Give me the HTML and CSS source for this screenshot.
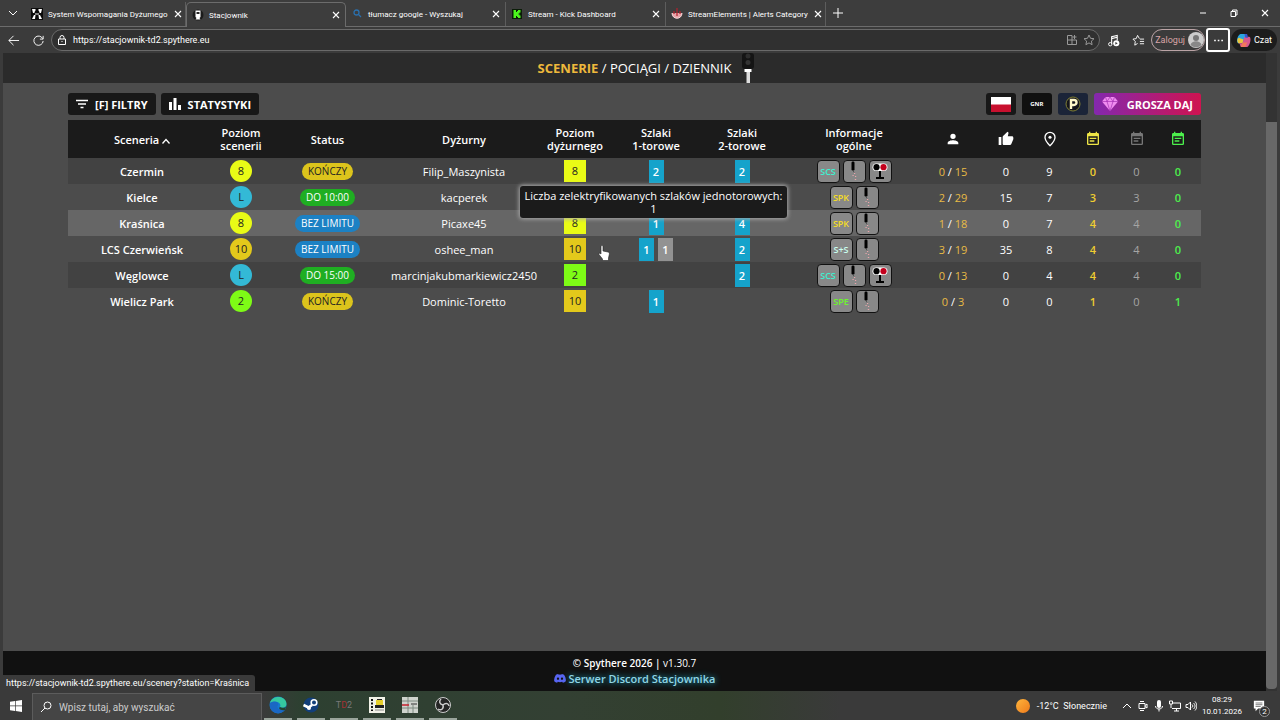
FILE: index.html
```html
<!DOCTYPE html>
<html lang="pl">
<head>
  <meta charset="UTF-8">
  <meta name="viewport" content="width=device-width, initial-scale=1.0">
  <title>Stacjownik</title>
  <link rel="stylesheet" href="styles.css">
</head>
<body>
  <!-- shared icons -->
  <svg class="sprite" aria-hidden="true">
    <symbol id="i-close" viewBox="0 0 10 10"><path d="M2 2l6 6M8 2l-6 6" fill="none" stroke="currentColor" stroke-width="1.1"/></symbol>
    <symbol id="i-signal" viewBox="0 0 20 20">
      <rect x="7.500" y="0.500" width="3" height="9" rx="1.200" fill="#000"/>
      <path d="M9 9.500l1 2" stroke="#444" stroke-width=".8"/>
      <path d="M10 12.500h1.200M8.500 14.500h1.200M11 15.500h1.200M10.800 18.500h1.400" stroke="#eba5ab" stroke-width="1.100"/>
    </symbol>
    <symbol id="i-lamps" viewBox="0 0 20 20">
      <path d="M10 9v8M6 17h8" stroke="#000" stroke-width="2"/>
      <rect x="2.500" y="2.500" width="15" height="7.500" rx="3.700" fill="#fff"/>
      <circle cx="6.500" cy="6.200" r="3.100" fill="#000"/>
      <circle cx="13.500" cy="6.200" r="3.100" fill="#c3001c"/>
    </symbol>
    <symbol id="i-calendar" viewBox="0 0 24 24"><path fill="currentColor" d="M17 10H7v2h10v-2zm2-7h-1V1h-2v2H8V1H6v2H5a2 2 0 0 0-2 2v14a2 2 0 0 0 2 2h14a2 2 0 0 0 2-2V5a2 2 0 0 0-2-2zm0 16H5V8h14v11zm-5-5H7v2h7v-2z"/></symbol>
  </svg>

  <div class="tab-bar">
    <button class="tab-menu" aria-label="Karty"><svg viewBox="0 0 10 10"><path d="M1 3l4 4 4-4" fill="none" stroke="currentColor"/></svg></button>
    <div class="tab">
      <svg class="favicon" viewBox="0 0 12 12"><path fill="#0b0b0b" d="M0 0h12v12H0z"/><path fill="#fff" d="M1 1h3.500v1.500L3.500 4v1H2zM7.500 1H11l-1 4H8.500V4l-1-1.500zM4 5.500h4v1H4zM3 7h1.500l-.5 4H1zM7.500 7H9l2 4H8z"/></svg>
      <span class="tab-title">System Wspomagania Dyżurnego</span>
      <button class="tab-close" aria-label="Zamknij"><svg><use href="#i-close"/></svg></button>
    </div>
    <div class="tab active">
      <svg class="favicon" viewBox="0 0 12 12"><circle cx="6" cy="6" r="5.500" fill="#1b1b1b"/><path fill="#fff" d="M3.500 1.500h5V8l-1 1 1 1.500h-5l1-1.500-1-1z"/><path fill="#222" d="M4.500 3h3v2h-3z"/></svg>
      <span class="tab-title">Stacjownik</span>
      <button class="tab-close" aria-label="Zamknij"><svg><use href="#i-close"/></svg></button>
    </div>
    <div class="tab">
      <svg class="favicon" viewBox="0 0 12 12"><circle cx="5.500" cy="4.500" r="2.500" fill="none" stroke="#2b70ad" stroke-width="1.300"/><path d="M7.500 6.500l2.500 2.500" stroke="#2b70ad" stroke-width="1.300"/></svg>
      <span class="tab-title">tłumacz google - Wyszukaj</span>
      <button class="tab-close" aria-label="Zamknij"><svg><use href="#i-close"/></svg></button>
    </div>
    <div class="tab">
      <svg class="favicon" viewBox="0 0 12 12"><path fill="#0b1d08" d="M1 1h10v10H1z"/><path fill="#4cf51d" d="M2.500 2H5v2h1V3h1V2h2.500v2.500h-1V5.500h-1v1h1v1h1V10H7V9H6V8H5v2H2.500z"/></svg>
      <span class="tab-title">Stream - Kick Dashboard</span>
      <button class="tab-close" aria-label="Zamknij"><svg><use href="#i-close"/></svg></button>
    </div>
    <div class="tab">
      <svg class="favicon" viewBox="0 0 12 12"><path d="M1 5c0 7 10 7 10 0" fill="#e8a3a8" stroke="#f6d8da"/><path d="M6 0v8M3 3v3M9 3v3" stroke="#b3202d" stroke-width="1.200"/></svg>
      <span class="tab-title">StreamElements | Alerts Category</span>
      <button class="tab-close" aria-label="Zamknij"><svg><use href="#i-close"/></svg></button>
    </div>
    <button class="new-tab" aria-label="Nowa karta"><svg viewBox="0 0 12 12"><path d="M6 1v10M1 6h10" stroke="currentColor"/></svg></button>
    <div class="window-controls">
      <button aria-label="Minimalizuj"><svg viewBox="0 0 10 10"><path d="M2 5h6" stroke="currentColor"/></svg></button>
      <button aria-label="Przywróć"><svg viewBox="0 0 10 10"><path d="M2 3.500h4.500V8.500H2zM3.500 3.500V2H8v5H6.500" fill="none" stroke="currentColor"/></svg></button>
      <button aria-label="Zamknij okno"><svg><use href="#i-close"/></svg></button>
    </div>
  </div>

  <div class="address-bar">
    <button aria-label="Wstecz"><svg viewBox="0 0 14 14"><path d="M13 7H2M7 2L2 7l5 5" fill="none" stroke="currentColor"/></svg></button>
    <button aria-label="Odśwież"><svg viewBox="0 0 14 14"><path d="M11.500 5A5 5 0 1 0 12 7.500M12 2v3.500H8.500" fill="none" stroke="currentColor"/></svg></button>
    <div class="url-box">
      <svg viewBox="0 0 12 12"><path d="M2.500 5h7v5.500h-7zM4 5V3.500a2 2 0 0 1 4 0V5M5.500 7.500h1" fill="none" stroke="currentColor"/></svg>
      <input type="text" aria-label="Adres" value="https://stacjownik-td2.spythere.eu">
      <svg class="dim" viewBox="0 0 12 12"><path d="M1.500 1.500H6v9H1.500zM6 6h4.500v4.500H6M1.500 6H6M8.500 1v4M6.500 3h4" fill="none" stroke="currentColor"/></svg>
      <svg class="dim" viewBox="0 0 12 12"><path d="M6 1l1.500 3.300 3.500.4-2.600 2.400.7 3.600L6 8.900l-3.100 1.800.7-3.600L1 4.700l3.500-.4z" fill="none" stroke="currentColor"/></svg>
    </div>
    <button aria-label="Muzyka"><svg viewBox="0 0 14 14"><path d="M5 11V3l6-1.500V7M5 5l6-1.500" fill="none" stroke="currentColor" stroke-width="1.200"/><circle cx="3.500" cy="11" r="1.800" fill="none" stroke="currentColor"/><circle cx="10" cy="10" r="3.300" fill="currentColor"/><path d="M9 8.500l2.500 1.500L9 11.500z" fill="#333"/></svg></button>
    <button aria-label="Ulubione"><svg viewBox="0 0 14 14"><path d="M8 5L6 1.500 4.500 5 1 5.500l2.500 2.500L3 12l3-1.800M8.500 5.500H13M8.500 8H13M8.500 10.500H13" fill="none" stroke="currentColor"/></svg></button>
    <button class="login">Zaloguj <svg viewBox="0 0 16 16"><circle cx="8" cy="8" r="8" fill="#ccc"/><circle cx="8" cy="6" r="3" fill="#777"/><path d="M2.500 13c1-5 10-5 11 0A8 8 0 0 1 2.500 13" fill="#888"/></svg></button>
    <button class="more" aria-label="Więcej"><svg viewBox="0 0 12 12"><path d="M2 6h1.500M5.300 6h1.500M8.600 6h1.500" stroke="currentColor" stroke-width="1.500"/></svg></button>
    <button class="chat"><svg viewBox="0 0 16 16"><path d="M5 1h5c2 0 1 3 3 4h-3L7 11H3C-1 11 2 1 5 1z" fill="#2aa6e0"/><path d="M3 5c-3 2-1 6 0 6h4l1-4z" fill="#e9c63d"/><path d="M9 4h5c3 0 1 11-3 11H6c-2 0-1-3-3-4h4z" fill="#d8588f"/><path d="M9 1h2c2 0 1 3 2 4h-3z" fill="#3556cf"/><path d="M5 15h5l2-5H7z" fill="#f2785c"/></svg> Czat</button>
  </div>

  <div class="viewport">
    <div class="app">
      <header class="app-header">
        <nav>
          <a class="active" href="#">SCENERIE</a> / <a href="#">POCIĄGI</a> / <a href="#">DZIENNIK</a>
          <svg class="semaphore" viewBox="0 0 14 30"><rect x="1" y="0" width="12" height="16" rx="3" fill="#141414"/><circle cx="7" cy="3" r="2.500" fill="#2d2d2d"/><circle cx="7" cy="9.500" r="2.500" fill="#333"/><path fill="#fff" d="M3.500 16h7v3h-7z"/><path fill="#ddd" d="M5.500 19h3.500v11H5.500z"/></svg>
        </nav>
      </header>

      <main>
        <div class="toolbar">
          <div class="toolbar-group">
            <button class="btn"><svg viewBox="0 0 12 12"><path d="M0 2.500h12M2 6h8M4.500 9.500h3" stroke="currentColor" stroke-width="1.500"/></svg> [F] FILTRY</button>
            <button class="btn"><svg viewBox="0 0 12 12"><path fill="currentColor" d="M0 4h3v8H0zM4.500 0h3v12h-3zM9 7h3v5H9z"/></svg> STATYSTYKI</button>
          </div>
          <div class="toolbar-group links">
            <button class="btn icon" aria-label="Język polski"><svg class="flag" viewBox="0 0 20 15"><path fill="#fff" d="M0 0h20v8H0z"/><path fill="#c8102e" d="M0 7.500h20V15H0z"/></svg></button>
            <button class="btn icon gnr">GNR</button>
            <button class="btn icon navy" aria-label="Pojazdownik"><svg class="coin" viewBox="0 0 16 16"><circle cx="8" cy="8" r="7" fill="#15151a" stroke="#7f7e35"/><path d="M6 13V4h3a2.300 2.300 0 0 1 0 5H6" fill="none" stroke="#fff8c8" stroke-width="2.400"/></svg></button>
            <button class="btn donate"><svg viewBox="0 0 16 14"><path fill="#f08cf0" d="M3.500 0h9L16 4.500 8 14 0 4.500z"/><path d="M0 4.500h16M3.500 0L5 4.500 8 14l3-9.500L12.500 0M5 4.500L8 0l3 4.500" fill="none" stroke="#a531b5" stroke-width=".7"/></svg> GROSZA DAJ</button>
          </div>
        </div>

        <div class="table-wrap">
          <table>
            <colgroup>
              <col class="c-name"><col class="c-small"><col class="c-status"><col class="c-user"><col class="c-level"><col class="c-track1"><col class="c-track2"><col class="c-info"><col class="c-players"><col class="c-small"><col class="c-spawn"><col class="c-small"><col class="c-spawn"><col>
            </colgroup>
            <thead>
              <tr>
                <th>Sceneria <svg class="sort" viewBox="0 0 8 6"><path d="M0.500 5.500L4 1.500l3.500 4" fill="none" stroke="currentColor" stroke-width="1.300"/></svg></th>
                <th>Poziom<br>scenerii</th>
                <th>Status</th>
                <th>Dyżurny</th>
                <th>Poziom<br>dyżurnego</th>
                <th>Szlaki<br>1-torowe</th>
                <th>Szlaki<br>2-torowe</th>
                <th>Informacje<br>ogólne</th>
                <th aria-label="Gracze"><svg class="th-icon" viewBox="0 0 24 24"><path fill="currentColor" d="M12 12a4 4 0 1 0 0-8 4 4 0 0 0 0 8zm0 2c-3 0-8 1.300-8 4v2h16v-2c0-2.700-5-4-8-4z"/></svg></th>
                <th aria-label="Polubienia"><svg class="th-icon" viewBox="0 0 24 24"><path fill="currentColor" d="M1 21h4V9H1v12zm22-11a2 2 0 0 0-2-2h-6.300l1-4.600v-.3c0-.4-.2-.8-.4-1.100L14.200 1 7.600 7.600C7.200 8 7 8.500 7 9v10c0 1.100.9 2 2 2h9c.8 0 1.500-.5 1.800-1.200l3-7.100c.1-.2.2-.5.2-.7v-2z"/></svg></th>
                <th aria-label="Spawny"><svg class="th-icon" viewBox="0 0 24 24"><path d="M12 2a7.500 7.500 0 0 0-7.500 7.500C4.500 15 12 22 12 22s7.500-7 7.500-12.500A7.500 7.500 0 0 0 12 2z" fill="none" stroke="currentColor" stroke-width="2"/><circle cx="12" cy="9.500" r="2.300" fill="currentColor"/></svg></th>
                <th class="yellow" aria-label="Rozkłady"><svg class="th-icon"><use href="#i-calendar"/></svg></th>
                <th class="muted" aria-label="Rozkłady nieaktywne"><svg class="th-icon"><use href="#i-calendar"/></svg></th>
                <th class="green" aria-label="Rozkłady aktywne"><svg class="th-icon"><use href="#i-calendar"/></svg></th>
              </tr>
            </thead>
            <tbody>
              <tr>
                <td class="name">Czermin</td>
                <td><span class="circle lv8">8</span></td>
                <td><span class="status ending">KOŃCZY</span></td>
                <td>Filip_Maszynista</td>
                <td><span class="square lv8">8</span></td>
                <td><span class="track">2</span></td>
                <td><span class="track">2</span></td>
                <td><div class="info"><span class="scs">SCS</span><span><svg><use href="#i-signal"/></svg></span><span><svg><use href="#i-lamps"/></svg></span></div></td>
                <td><b>0</b> / <b>15</b></td><td>0</td><td>9</td><td class="gold">0</td><td class="grey">0</td><td class="green">0</td>
              </tr>
              <tr>
                <td class="name">Kielce</td>
                <td><span class="circle lvl">L</span></td>
                <td><span class="status until">DO 10:00</span></td>
                <td>kacperek</td>
                <td></td>
                <td></td>
                <td></td>
                <td><div class="info"><span class="spk">SPK</span><span><svg><use href="#i-signal"/></svg></span></div></td>
                <td><b>2</b> / <b>29</b></td><td>15</td><td>7</td><td class="gold">3</td><td class="grey">3</td><td class="green">0</td>
              </tr>
              <tr class="hovered">
                <td class="name">Kraśnica</td>
                <td><span class="circle lv8">8</span></td>
                <td><span class="status free">BEZ LIMITU</span></td>
                <td>Picaxe45</td>
                <td><span class="square lv8">8</span></td>
                <td><span class="track">1</span></td>
                <td><span class="track">4</span></td>
                <td><div class="info"><span class="spk">SPK</span><span><svg><use href="#i-signal"/></svg></span></div></td>
                <td><b>1</b> / <b>18</b></td><td>0</td><td>7</td><td class="gold">4</td><td class="grey">4</td><td class="green">0</td>
              </tr>
              <tr>
                <td class="name">LCS Czerwieńsk</td>
                <td><span class="circle lv10">10</span></td>
                <td><span class="status free">BEZ LIMITU</span></td>
                <td>oshee_man</td>
                <td><span class="square lv10">10</span></td>
                <td><span class="track">1</span><span class="track off">1</span></td>
                <td><span class="track">2</span></td>
                <td><div class="info"><span class="ss">S+S</span><span><svg><use href="#i-signal"/></svg></span></div></td>
                <td><b>3</b> / <b>19</b></td><td>35</td><td>8</td><td class="gold">4</td><td class="grey">4</td><td class="green">0</td>
              </tr>
              <tr>
                <td class="name">Węglowce</td>
                <td><span class="circle lvl">L</span></td>
                <td><span class="status until">DO 15:00</span></td>
                <td>marcinjakubmarkiewicz2450</td>
                <td><span class="square lv2">2</span></td>
                <td></td>
                <td><span class="track">2</span></td>
                <td><div class="info"><span class="scs">SCS</span><span><svg><use href="#i-signal"/></svg></span><span><svg><use href="#i-lamps"/></svg></span></div></td>
                <td><b>0</b> / <b>13</b></td><td>0</td><td>4</td><td class="gold">4</td><td class="grey">4</td><td class="green">0</td>
              </tr>
              <tr>
                <td class="name">Wielicz Park</td>
                <td><span class="circle lv2">2</span></td>
                <td><span class="status ending">KOŃCZY</span></td>
                <td>Dominic-Toretto</td>
                <td><span class="square lv10">10</span></td>
                <td><span class="track">1</span></td>
                <td></td>
                <td><div class="info"><span class="spe">SPE</span><span><svg><use href="#i-signal"/></svg></span></div></td>
                <td><b>0</b> / <b>3</b></td><td>0</td><td>0</td><td class="gold">1</td><td class="grey">0</td><td class="green">1</td>
              </tr>
            </tbody>
          </table>
          <div class="tooltip" role="tooltip">Liczba zelektryfikowanych szlaków jednotorowych:<br>1</div>
          <svg class="cursor" viewBox="0 0 12 16"><path d="M3 1.500c0-1.300 2-1.300 2 0V6l5 1c1 .3 1.500 1 1.400 2L10.500 13v2.500h-6V14L1 9.500c-.6-1 .6-1.700 1.300-1L3 9z" fill="#fff" stroke="#222" stroke-width=".6"/></svg>
        </div>
      </main>

      <footer>
        <div class="copyright">© Spythere 2026 | <a href="#">v1.30.7</a></div>
        <a class="discord" href="#"><svg viewBox="0 0 24 18"><path fill="#5865f2" d="M20 1.500A19 19 0 0 0 15.300 0l-.7 1.400a18 18 0 0 0-5.300 0L8.600 0A19 19 0 0 0 4 1.500C1 6 0 10.300.4 14.500A19 19 0 0 0 6.200 17.500l1.400-2a13 13 0 0 0 8.800 0l1.400 2a19 19 0 0 0 5.800-3C24.200 9.700 22.900 5.400 20 1.500zM8 12c-1.200 0-2.200-1-2.200-2.400S6.800 7.200 8 7.200s2.200 1.100 2.200 2.400S9.200 12 8 12zm8 0c-1.200 0-2.200-1-2.200-2.400s1-2.400 2.200-2.400 2.200 1.100 2.200 2.400S17.200 12 16 12z"/></svg> Serwer Discord Stacjownika</a>
      </footer>
    </div>
    <div class="scrollbar"><div class="thumb"></div></div>
    <div class="link-status">https://stacjownik-td2.spythere.eu/scenery?station=Kraśnica</div>
  </div>

  <div class="taskbar">
    <button class="start" aria-label="Start"><svg viewBox="0 0 12 12"><path fill="#fff" d="M0 1.700l5-.7v4.600H0zM5.700.9L12 0v5.600H5.700zM0 6.300h5V11l-5-.7zM5.700 6.300H12V12l-6.300-.9z"/></svg></button>
    <label class="search">
      <svg viewBox="0 0 12 12"><circle cx="7.500" cy="4.500" r="3.500" fill="none" stroke="currentColor"/><path d="M5 7l-4 4" stroke="currentColor"/></svg>
      <input type="text" aria-label="Wyszukaj" placeholder="Wpisz tutaj, aby wyszukać">
    </label>
    <div class="apps">
      <button aria-label="Edge"><svg viewBox="0 0 18 18"><circle cx="9" cy="9" r="8.500" fill="#1479cf"/><path d="M1 7C3-1 17-1 17.500 8c0 4-5 4.500-6.500 3 2-4-4-7-10-4z" fill="#35c8a0"/><path d="M1 7c5-3 9-1 8 2-2 3 1 6 7 5-4 5-13 4-15-3z" fill="#1a67c4"/><path d="M11 11c1.500 1.500 6.500 1 6.500-2l-1.500 5c-5 1-7-2-5-3z" fill="#23452f"/></svg></button>
      <button aria-label="Steam"><svg viewBox="0 0 18 18"><circle cx="9" cy="9" r="7.500" fill="#123f7a"/><circle cx="12" cy="6.500" r="2.800" fill="#123f7a" stroke="#fff" stroke-width="1.600"/><path d="M1.500 9l5 2.500L10 9" fill="none" stroke="#fff" stroke-width="2.600"/><circle cx="7" cy="12" r="2" fill="#fff"/></svg></button>
      <button class="td2">T<em>D</em>2</button>
      <button aria-label="Symulator"><svg viewBox="0 0 18 18"><path fill="#f2f2e8" d="M1 1h16v16H1z"/><path d="M4 3v12" stroke="#111" stroke-width="2" stroke-dasharray="2 1.500"/><path fill="#e6cf2b" d="M8 4h7v5H8z"/><path fill="#222" d="M7 9h9v3H7zM9 3h5v1H9z"/><path d="M7 14h9" stroke="#888"/></svg></button>
      <button aria-label="Pulpit"><svg viewBox="0 0 18 18"><path fill="#cfd3cd" d="M1 1h16v16H1z"/><path d="M1 5h16M1 12h16M7 1v16M12 9v8" stroke="#7c8a80"/><path d="M1 9h7" stroke="#c4202d" stroke-width="1.500"/><path d="M10 8h6" stroke="#333"/></svg></button>
      <button aria-label="OBS"><svg viewBox="0 0 18 18"><circle cx="9" cy="9" r="7.500" fill="#252525" stroke="#ccc"/><path d="M9 9c-4-1-4-4-2-6M9 9c3-3 6-1 6 1M9 9c1 4-2 6-5 4" fill="none" stroke="#ccc" stroke-width="1.500"/></svg></button>
    </div>
    <div class="tray">
      <span class="sun"></span>
      <span class="weather">-12°C&ensp;Słonecznie</span>
      <svg viewBox="0 0 12 12"><path d="M2 8l4-4 4 4" fill="none" stroke="currentColor"/></svg>
      <svg viewBox="0 0 12 12"><path d="M2 3.500h6v5H2zM8 5.500l2-1.500v4L8 6.500M3 1.500h4M3 10.500h4" fill="none" stroke="currentColor"/></svg>
      <svg viewBox="0 0 12 12"><rect x="4" y="0" width="4" height="8" rx="2" fill="currentColor"/><path d="M2.500 6c0 4 7 4 7 0M6 9v2.500" fill="none" stroke="currentColor"/></svg>
      <svg viewBox="0 0 12 12"><path d="M4 3h7.500v5.500H3M5 11h5M7.500 8.500V11M.5 1h3v3h-3zM2 4v4" fill="none" stroke="currentColor"/></svg>
      <svg viewBox="0 0 12 12"><path d="M1 4.500h2L5.500 2v8L3 7.500H1zM7 4.500c1 1 1 2 0 3M8.500 3c2 2 2 4 0 6M10 1.500c2.500 3 2.500 6 0 9" fill="none" stroke="currentColor"/></svg>
      <div class="clock">08:29<br>10.01.2026</div>
      <button class="notifications" aria-label="Powiadomienia"><svg viewBox="0 0 14 14"><path fill="#fff" d="M1 1h12v9H6l-3 3v-3H1z"/><path d="M3 3.500h8M3 5.500h8M3 7.500h6" stroke="#444" stroke-width=".8"/></svg><span>2</span></button>
    </div>
  </div>
</body>
</html>
```
FILE: styles.css
```css
* {
  box-sizing: border-box;
}

body {
  margin: 0;
  min-height: 100vh;
  display: flex;
  flex-direction: column;
  background-color: #3b3b3b;
  color: #fff;
  font-family: Roboto, sans-serif;
  font-size: 10px;
}

button,
input {
  font: inherit;
  color: inherit;
  background: none;
  border: none;
  padding: 0;
  margin: 0;
  outline: none;
}

button {
  display: flex;
  align-items: center;
  justify-content: center;
}

a {
  color: inherit;
  text-decoration: none;
}

.sprite {
  display: none;
}

/* browser tabs */
.tab-bar {
  display: flex;
  align-items: flex-end;
  height: 27px;
  border-bottom: 1px solid #6c6c6c;
  background-color: #3d3d3d;
}

.tab-menu {
  width: 26px;
  height: 26px;
}

.tab-menu svg,
.tab-close svg,
.window-controls svg {
  width: 10px;
  height: 10px;
}

.tab {
  display: flex;
  align-items: center;
  gap: 5px;
  width: 160px;
  height: 24px;
  padding: 0 4px 0 5px;
  border-right: 1px solid #5d5d5d;
}

.tab.active {
  height: 25px;
  margin-bottom: -1px;
  border: 1px solid #6c6c6c;
  border-bottom: none;
  border-radius: 5px 5px 0 0;
  background-color: #3d3d3d;
}

.favicon {
  width: 12px;
  height: 12px;
  flex: none;
}

.tab-title {
  flex: 1;
  white-space: nowrap;
  font-size: 8px;
}

.new-tab {
  width: 24px;
  height: 26px;
}

.new-tab svg {
  width: 12px;
  height: 12px;
}

.window-controls {
  display: flex;
  margin-left: auto;
}

.window-controls button {
  width: 31px;
  height: 26px;
}

/* address bar */
.address-bar {
  display: flex;
  align-items: center;
  gap: 1px;
  height: 26px;
  padding: 0 3px 0 1px;
  font-size: 9px;
}

.address-bar button {
  width: 24px;
  height: 24px;
}

.address-bar button svg {
  width: 13px;
  height: 13px;
}

.url-box {
  display: flex;
  align-items: center;
  gap: 5px;
  flex: 1;
  height: 22px;
  padding: 0 4px;
  border: 1px solid #6a6a6a;
  border-radius: 11px;
  background-color: #303030;
}

.url-box input {
  flex: 1;
}

.url-box svg {
  width: 12px;
  height: 12px;
}

.dim {
  color: #999;
}

.address-bar .login {
  width: 54px;
  height: 22px;
  justify-content: flex-end;
  gap: 3px;
  border: 1px solid #bba4a6;
  border-radius: 11px;
  color: #d9a5a8;
}

.address-bar .login svg {
  width: 16px;
  height: 16px;
}

.address-bar .more {
  border: 2px solid #fff;
  border-radius: 3px;
}

.address-bar .chat {
  width: 46px;
  height: 22px;
  gap: 3px;
  border-radius: 11px;
  background-color: #1c1c1c;
}

.address-bar .chat svg {
  width: 15px;
  height: 15px;
}

/* page */
.viewport {
  position: relative;
  flex: 1;
  display: flex;
  padding: 0 3px;
}

.app {
  flex: 1;
  display: flex;
  flex-direction: column;
  background-color: #4c4c4c;
  font-family: "Open Sans", sans-serif;
  font-size: 11px;
}

.app-header {
  display: flex;
  justify-content: center;
  align-items: center;
  height: 30px;
  background-color: #2b2b2b;
  font-size: 13px;
}

.app-header nav {
  position: relative;
}

.app-header .active {
  color: #eeb93c;
  font-weight: bold;
}

.semaphore {
  position: absolute;
  left: 100%;
  top: 50%;
  width: 14px;
  height: 30px;
  margin: -15px 0 0 10px;
}

main {
  flex: 1;
  padding: 10px 65px;
}

.toolbar {
  display: flex;
  justify-content: space-between;
  margin-bottom: 5px;
}

.toolbar-group {
  display: flex;
  gap: 5px;
}

.toolbar-group.links {
  gap: 6px;
}

.btn {
  gap: 7px;
  height: 22px;
  padding: 0 8px;
  border-radius: 3px;
  background-color: #181818;
  font-weight: bold;
}

.btn svg {
  width: 12px;
  height: 12px;
}

.btn.icon {
  width: 30px;
  padding: 0;
}

.btn .flag {
  width: 20px;
  height: 15px;
}

.btn.gnr {
  background-color: #101010;
  font-size: 6px;
}

.btn.navy {
  background-color: #1b2438;
}

.btn .coin {
  width: 16px;
  height: 16px;
}

.btn.donate {
  gap: 9px;
  background: linear-gradient(to right, #8428ae, #cf1350);
}

.btn.donate svg {
  width: 16px;
  height: 14px;
}

/* sceneries */
.table-wrap {
  position: relative;
}

table {
  width: 100%;
  border-collapse: collapse;
  table-layout: fixed;
  text-align: center;
}

.c-name { width: 148px; }
.c-small { width: 50px; }
.c-status { width: 123px; }
.c-user { width: 150px; }
.c-level { width: 72px; }
.c-track1 { width: 90px; }
.c-track2 { width: 82px; }
.c-info { width: 142px; }
.c-players { width: 56px; }
.c-spawn { width: 37px; }

th,
td {
  padding: 0;
}

th {
  height: 38px;
  background-color: #1b1b1b;
  font-weight: 600;
  line-height: 13px;
}

tbody tr {
  height: 26px;
}

tbody tr:nth-child(odd) {
  background-color: #424242;
}

tbody tr.hovered {
  background-color: #666;
}

.sort {
  width: 8px;
  height: 6px;
}

.th-icon {
  display: block;
  width: 16px;
  height: 16px;
  margin: 0 auto;
}

.name {
  font-weight: 600;
}

.circle,
.square {
  display: block;
  width: 22px;
  height: 22px;
  margin: 0 auto;
  line-height: 22px;
  color: #222;
}

.circle {
  border-radius: 50%;
}

.lv2 { background-color: #7efb16; }
.lv8 { background-color: #e9fb16; }
.lv10 { background-color: #e3c91b; }
.lvl { background-color: #33b9d6; }

.status {
  display: inline-block;
  padding: 0 6px;
  border-radius: 9px;
  font-size: 10px;
  line-height: 17px;
  vertical-align: middle;
}

.ending {
  background-color: #dcc41c;
  color: #222;
}

.until { background-color: #1fae22; }
.free { background-color: #1c81c4; }

.track {
  display: inline-block;
  width: 15px;
  margin: 0 2px;
  line-height: 23px;
  vertical-align: top;
  background-color: #15a3cb;
  font-weight: 600;
}

.track.off {
  background-color: #929292;
}

.info {
  display: flex;
  justify-content: center;
  gap: 3px;
}

.info span {
  display: flex;
  align-items: center;
  justify-content: center;
  width: 23px;
  height: 23px;
  border: 1px solid #111;
  border-radius: 4px;
  background-color: #888;
  font-size: 9px;
  font-weight: 600;
}

.info svg {
  width: 20px;
  height: 20px;
}

.info .scs { color: #3df0d0; }
.info .spk { color: #f5dd25; }
.info .ss { color: #c9ffef; }
.info .spe { color: #6df52c; }

td b {
  color: #e8bb45;
  font-weight: normal;
}

.gold { color: #f0cd30; }
.grey { color: #a5a5a5; }
.yellow { color: #eee546; }
.muted { color: #777; }
.green { color: #4cf04c; }

td.gold,
td.green {
  font-weight: 600;
}

.tooltip {
  position: absolute;
  top: 66px;
  left: 452px;
  width: 267px;
  padding: 3px 0;
  border-radius: 3px;
  background-color: #1b1b1b;
  box-shadow: 0 0 4px 1px #aaa;
  line-height: 13px;
  text-align: center;
}

.cursor {
  position: absolute;
  top: 125px;
  left: 530px;
  width: 12px;
  height: 16px;
}

footer {
  display: flex;
  flex-direction: column;
  align-items: center;
  padding: 5px 0;
  background-color: #111;
  line-height: 15px;
  font-weight: 600;
}

.copyright {
  font-size: 10px;
}

.copyright a {
  font-weight: normal;
}

.discord {
  color: #8fd6e6;
  text-shadow: 0 0 6px #22b6d4;
}

.discord svg {
  width: 12px;
  height: 9px;
}

.scrollbar {
  width: 11px;
  padding-top: 69px;
  display: flex;
  background-color: #333;
}

.thumb {
  flex: 1;
  margin-bottom: 2px;
  border-radius: 0 0 4px 4px;
  background-color: #686868;
}

.link-status {
  position: absolute;
  left: 0;
  bottom: 0;
  padding: 0 6px;
  border-radius: 0 3px 0 0;
  background-color: #3a3a3a;
  font-size: 9px;
  line-height: 16px;
}

/* taskbar */
.taskbar {
  display: flex;
  height: 29px;
  background: linear-gradient(to right, #3a3a3a 262px, #2d4031 300px, #334033 560px, #323f2c 720px, #3a3a3a 840px);
}

.start {
  width: 32px;
}

.start svg {
  width: 12px;
  height: 12px;
}

.search {
  display: flex;
  align-items: center;
  gap: 7px;
  width: 230px;
  margin-top: 2px;
  padding: 0 7px;
  border: 1px solid #5c5c5c;
  border-bottom: none;
  background-color: #454545;
}

.search svg {
  width: 12px;
  height: 12px;
}

.search input {
  flex: 1;
  min-width: 0;
}

.search input::placeholder {
  color: #ccc;
}

.apps {
  display: flex;
  gap: 5px;
  margin-left: 2px;
}

.apps button {
  width: 28px;
  border-bottom: 2px solid #9aa59c;
}

.apps svg {
  width: 18px;
  height: 18px;
}

.apps .td2 {
  color: #777;
  font-size: 9px;
}

.td2 em {
  color: #a63034;
  font-style: normal;
}

.tray {
  display: flex;
  align-items: center;
  gap: 4px;
  margin-left: auto;
  padding-right: 15px;
}

.tray svg {
  width: 12px;
  height: 12px;
}

.sun {
  width: 14px;
  height: 14px;
  margin-right: 3px;
  border-radius: 50%;
  background: linear-gradient(135deg, #ffb53c, #ee7a1b);
}

.weather {
  margin-right: 10px;
  font-size: 9px;
}

.clock {
  width: 42px;
  margin-right: 6px;
  font-size: 8px;
  line-height: 12px;
  text-align: center;
}

.notifications {
  position: relative;
}

.notifications span {
  position: absolute;
  right: -5px;
  bottom: -5px;
  width: 11px;
  height: 11px;
  border: 1px solid #999;
  border-radius: 50%;
  background-color: #333;
  font-size: 8px;
  line-height: 9px;
}
```
